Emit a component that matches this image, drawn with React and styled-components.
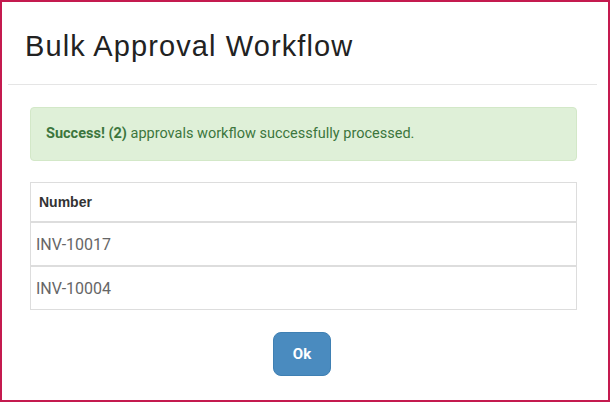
import React from "react";
import styled, { createGlobalStyle } from "styled-components";

const GlobalStyle = createGlobalStyle`
  html, body {
    margin: 0;
    padding: 0;
    background: #fff;
  }
  * {
    box-sizing: border-box;
  }
`;

const Frame = styled.div`
  width: 610px;
  height: 402px;
  border: 2px solid #c41a4f;
  background: #fff;
  display: flex;
  flex-direction: column;
  padding: 0 11px 0 6px;
  font-family: Roboto, "Liberation Sans", Arial, sans-serif;
`;

const Header = styled.header`
  padding: 27px 17px 21px;
  border-bottom: 1px solid #e5e5e5;
`;

const Title = styled.h1`
  margin: 0;
  font-family: "Liberation Sans", Arial, sans-serif;
  font-size: 29px;
  line-height: 34px;
  font-weight: 400;
  letter-spacing: 1.1px;
  color: #222;
`;

const Body = styled.section`
  display: flex;
  flex-direction: column;
  padding: 22px 20px 0 22px;
  gap: 21px;
`;

const Alert = styled.div`
  background: #dff0d8;
  border: 1px solid #d3e8c8;
  border-radius: 4px;
  padding: 16px 15px;
  color: #3c763d;
  font-size: 14.5px;
  line-height: 20px;

  strong {
    font-weight: 700;
  }
`;

const Table = styled.div`
  border: 1px solid #ddd;
  display: flex;
  flex-direction: column;
`;

const Cell = styled.div`
  height: ${(p) => (p.$head ? 40 : p.$last ? 42 : 44)}px;
  display: flex;
  align-items: center;
  padding-left: ${(p) => (p.$head ? 8 : 5)}px;
  border-bottom: ${(p) => (p.$last ? "none" : "2px solid #ddd")};
  font-family: ${(p) => (p.$head ? '"Liberation Sans", Arial, sans-serif' : "Roboto, sans-serif")};
  font-size: ${(p) => (p.$head ? 14 : 16)}px;
  font-weight: ${(p) => (p.$head ? 700 : 400)};
  color: ${(p) => (p.$head ? "#333" : "#666")};
`;

const Footer = styled.div`
  display: flex;
  justify-content: center;
  padding-right: 3px;
  margin-top: 1px;
`;

const OkButton = styled.button`
  width: 58px;
  height: 44px;
  border: 1px solid #3f80b3;
  border-radius: 8px;
  background: #4a8bbf;
  color: #fff;
  font-family: Roboto, sans-serif;
  font-size: 15px;
  font-weight: 700;
  cursor: pointer;
`;

const rows = ["INV-10017", "INV-10004"];

const App = () => (
  <>
    <GlobalStyle />
    <Frame>
      <Header>
        <Title>Bulk Approval Workflow</Title>
      </Header>
      <Body>
        <Alert>
          <strong>Success!</strong> <strong>(2)</strong> approvals workflow successfully processed.
        </Alert>
        <Table>
          <Cell $head>Number</Cell>
          {rows.map((r, i) => (
            <Cell key={r} $last={i === rows.length - 1}>
              {r}
            </Cell>
          ))}
        </Table>
        <Footer>
          <OkButton>Ok</OkButton>
        </Footer>
      </Body>
    </Frame>
  </>
);

export default App;
